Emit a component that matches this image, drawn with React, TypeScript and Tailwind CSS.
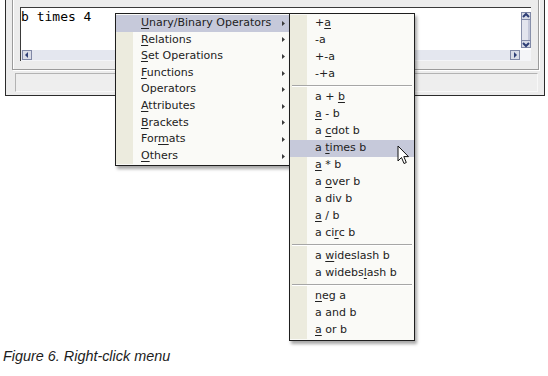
import React from 'react';

type Item = { label: string; u?: number; active?: boolean };

const mainItems: Item[] = [
  { label: 'Unary/Binary Operators', u: 0, active: true },
  { label: 'Relations', u: 0 },
  { label: 'Set Operations', u: 0 },
  { label: 'Functions', u: 0 },
  { label: 'Operators' },
  { label: 'Attributes', u: 0 },
  { label: 'Brackets', u: 0 },
  { label: 'Formats', u: 3 },
  { label: 'Others', u: 0 },
];

const subGroups: Item[][] = [
  [{ label: '+a', u: 1 }, { label: '-a' }, { label: '+-a' }, { label: '-+a' }],
  [
    { label: 'a + b', u: 4 },
    { label: 'a - b', u: 0 },
    { label: 'a cdot b', u: 2 },
    { label: 'a times b', u: 2, active: true },
    { label: 'a * b', u: 0 },
    { label: 'a over b', u: 2 },
    { label: 'a div b' },
    { label: 'a / b', u: 0 },
    { label: 'a circ b', u: 4 },
  ],
  [{ label: 'a wideslash b', u: 2 }, { label: 'a widebslash b', u: 8 }],
  [{ label: 'neg a', u: 0 }, { label: 'a and b' }, { label: 'a or b', u: 0 }],
];

function Label({ item }: { item: Item }) {
  if (item.u === undefined) return <span>{item.label}</span>;
  const { label, u } = item;
  return (
    <span>
      {label.slice(0, u)}
      <span className="underline underline-offset-2">{label.slice(u, u + 1)}</span>
      {label.slice(u + 1)}
    </span>
  );
}

function Row({ item, h, arrow }: { item: Item; h: string; arrow?: boolean }) {
  return (
    <div className={`flex items-center ${h} ${item.active ? 'bg-[#c6c9da]' : ''}`}>
      <div className={`w-[17px] self-stretch ${item.active ? '' : 'bg-[#ecebde]'}`} />
      <div className="flex-1 pl-[8px] whitespace-nowrap">
        <Label item={item} />
      </div>
      {arrow && (
        <svg width="3" height="5" viewBox="0 0 3 5" className="mr-[5px]">
          <path d="M0 0 L3 2.5 L0 5 Z" fill="#3a3a3a" />
        </svg>
      )}
    </div>
  );
}

function ScrollBtn({ dir }: { dir: 'up' | 'down' | 'left' | 'right' }) {
  const d = {
    up: 'M2 6 L5 3 L8 6',
    down: 'M2 4 L5 7 L8 4',
    left: 'M6 2 L3 5 L6 8',
    right: 'M4 2 L7 5 L4 8',
  }[dir];
  return (
    <div className="w-[10px] h-[8px] border border-[#8088a6] bg-[#d9dce7] flex items-center justify-center">
      <svg width="8" height="8" viewBox="1 1 8 8">
        <path d={d} stroke="#2f3f76" strokeWidth="2" fill="none" />
      </svg>
    </div>
  );
}

export default function App() {
  return (
    <div className="relative w-[548px] h-[376px] overflow-hidden bg-white">
      {/* window */}
      <div className="-mt-[10px] ml-[5px] w-[540px] h-[106px] bg-[#ececec] border-x border-b border-[#2b2b2b] flex flex-col">
        <div className="ml-[6px] w-[527px] h-[80px] border border-[#9b9b9b] shadow-[inset_1px_1px_0_#fff,1px_1px_0_#fff] pt-[16px] pl-[7px]">
          <div className="w-[511px] h-[54px] bg-white border-t border-l border-[#3a3a3a] flex flex-col">
            <div className="flex flex-1">
              <div className="flex-1 pt-[1px] text-[13px] leading-[15px] text-black font-['DejaVu_Sans_Mono',monospace]">
                b times 4
              </div>
              <div className="w-[10px] pt-[4px] flex flex-col">
                <div className="h-[8px]"><ScrollBtn dir="up" /></div>
                <div className="h-[20px] border-x border-[#8890aa] bg-[#e3e5ee] shadow-[inset_-2px_0_0_#c4c8da]" />
                <div className="h-[8px]"><ScrollBtn dir="down" /></div>
              </div>
            </div>
            <div className="h-[11px] flex items-start bg-[#f4f5f8]">
              <div className="flex flex-1 h-[10px] bg-[#e4e7ef] pl-[1px]">
                <div className="w-[10px] h-[10px] border border-[#8088a6] bg-[#d9dce7] flex items-center justify-center">
                  <svg width="6" height="6" viewBox="0 0 6 6"><path d="M4 0 L1 3 L4 6 Z" fill="#2f3f76" /></svg>
                </div>
                <div className="flex-1" />
                <div className="w-[10px] h-[10px] border border-[#8088a6] bg-[#d9dce7] flex items-center justify-center">
                  <svg width="6" height="6" viewBox="0 0 6 6"><path d="M2 0 L5 3 L2 6 Z" fill="#2f3f76" /></svg>
                </div>
              </div>
              <div className="w-[11px]" />
            </div>
          </div>
        </div>
        <div className="ml-[9px] mt-[3px] w-[523px] h-[19px] border border-[#b3b3b3] border-b-[#f8f8f8] border-r-[#f8f8f8] bg-[#eeeeee]" />
      </div>

      {/* caption */}
      <div className="mt-[252px] pl-[3px] text-[14.4px] leading-[16px] italic text-[#1c1c1c] font-['Liberation_Sans',Arial,sans-serif]">
        Figure 6. Right-click menu
      </div>

      {/* context menu */}
      <div className="absolute left-[115px] top-[13px] w-[176px] py-[1px] bg-[#fafaf7] border border-[#1e1e1e] shadow-[2px_3px_3px_rgba(0,0,0,0.35)] text-[11px] text-[#222] font-['DejaVu_Sans',sans-serif]">
        {mainItems.map((it) => (
          <Row key={it.label} item={it} h="h-[16.6px]" arrow />
        ))}
      </div>

      {/* submenu */}
      <div className="absolute left-[289px] top-[13px] w-[126px] py-[1px] bg-[#fafaf7] border border-[#1e1e1e] shadow-[2px_3px_3px_rgba(0,0,0,0.35)] text-[11px] text-[#222] font-['DejaVu_Sans',sans-serif]">
        {subGroups.map((g, gi) => (
          <div key={gi}>
            {gi > 0 && (
              <div className="h-[6px] flex items-center px-[2px] relative">
                <div className="absolute left-0 top-0 bottom-0 w-[17px] bg-[#ecebde]" />
                <div className="relative w-full h-[2px] border-t border-[#a6a6a6] border-b border-b-white" />
              </div>
            )}
            {g.map((it) => (
              <Row key={it.label} item={it} h="h-[17px]" />
            ))}
          </div>
        ))}
      </div>

      {/* mouse pointer */}
      <svg className="absolute left-[397px] top-[145px]" width="13" height="20" viewBox="0 0 13 20">
        <path d="M1 1 L1 16 L4.5 12.5 L7 18.5 L9.3 17.5 L6.8 11.6 L11.5 11.6 Z" fill="#fff" stroke="#111" strokeWidth="1" strokeLinejoin="round" />
      </svg>
    </div>
  );
}
